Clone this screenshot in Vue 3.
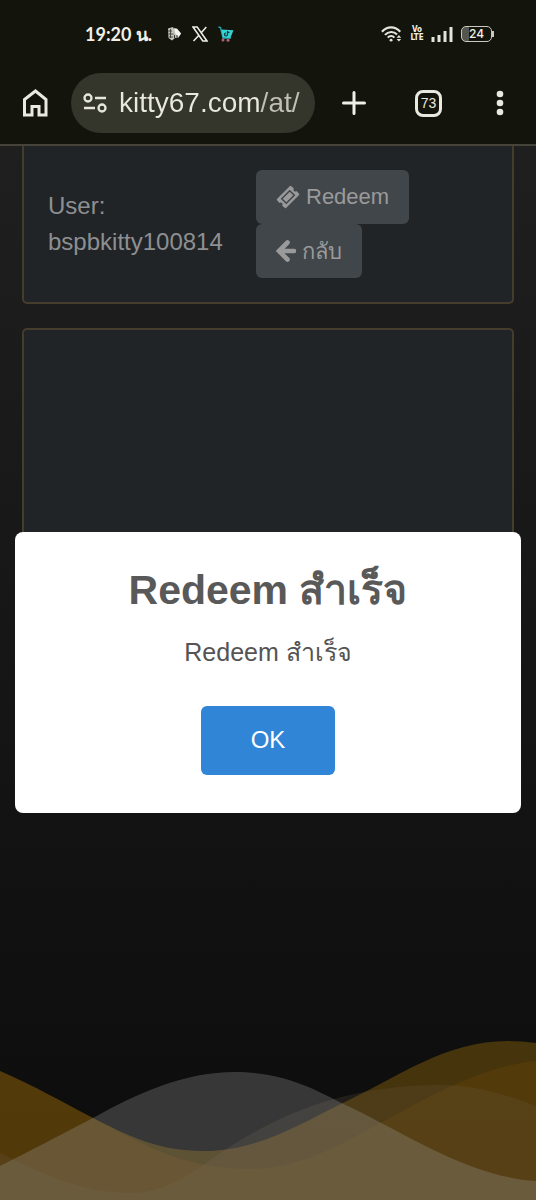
<script setup>
import { ref } from 'vue'

const address = ref('kitty67.com/at/')
const username = 'bspbkitty100814'
const dialogOpen = ref(true)
</script>

<template>
  <div class="screen">
    <header class="chrome">
      <div class="status">
        <div class="status-left">
          <span class="clock">19:20 น.</span>
          <svg class="app" viewBox="0 0 16 16" aria-hidden="true">
            <path d="M2 2.500L7 1l1 2 3-.5 4 5-2.500 4L9 12l-3 2.500L2.500 12z" fill="#c4c4be" />
            <path d="M8 2l3 1 4 4.500-2.500 3.500-3-3z" fill="#f4f4f0" />
            <path d="M2 5h4M2.500 8h5M3 11h4M4.500 3v9" stroke="#4a4a44" stroke-width="1" fill="none" />
            <path d="M8.500 9v3M11 9v2.500" stroke="#34342e" stroke-width="1" fill="none" />
          </svg>
          <svg class="app" viewBox="0 0 16 16" aria-hidden="true">
            <path d="M1 1h4.200l9.800 14h-4.200zM14.300 1L8.800 7.200M7.200 9L1.500 15" fill="none" stroke="#efefe8" stroke-width="1.500" />
          </svg>
          <svg class="app" viewBox="0 0 16 16" aria-hidden="true">
            <path d="M.5 1l2 .5 2.500 10.500h8" fill="none" stroke="#27a9ad" stroke-width="1.300" />
            <path d="M3.200 3.500l12.300.8-3.200 7.700-7.300-.5z" fill="#35d3d1" />
            <path d="M9.500 5v3.500a1.500 1.500 0 1 1-1.500-1.500M9.500 5.200c.4 1 1 1.300 2 1.300" fill="none" stroke="#12343a" stroke-width="1.200" />
            <circle cx="5" cy="14" r="1.500" fill="#b0607a" />
            <circle cx="10" cy="14.300" r="1.500" fill="#b0607a" />
          </svg>
        </div>
        <div class="status-right">
          <svg class="wifi" viewBox="0 0 24 18" aria-hidden="true">
            <g fill="none" stroke="#e4e4dc" stroke-width="2.300">
              <path d="M1 6.500C6.500.2 15.500.2 21 6.500" />
              <path d="M4.300 10C8 5.800 14 5.800 17.500 9.500" />
              <path d="M7.400 13c2-2.400 5.200-2.400 7.200 0" />
            </g>
            <circle cx="11" cy="15.700" r="1.600" fill="#e4e4dc" />
            <path d="M17 13l2.500-2.800L22 13zM17 14.500l2.500 2.800 2.500-2.800z" fill="#e4e4dc" />
          </svg>
          <span class="volte"><span>Vo</span><span>LTE</span></span>
          <svg class="signal" viewBox="0 0 22 16" aria-hidden="true">
            <path d="M2 16v-5M8 16v-7M14 16V5M20 16V1" stroke="#e4e4dc" stroke-width="3" />
          </svg>
          <span class="battery"><span>24</span></span>
        </div>
      </div>
      <div class="toolbar">
        <button class="icon-btn home" aria-label="Home">
          <svg viewBox="0 0 26 28" aria-hidden="true">
            <path d="M2.500 10.500L13.500 2l10.500 8.500V26h-7v-8.500h-7V26H2.500z" fill="none" stroke="#e9e9df" stroke-width="3" />
          </svg>
        </button>
        <div class="omnibox">
          <svg viewBox="0 0 24 20" aria-hidden="true">
            <g fill="none" stroke="#e6e6dc" stroke-width="2.300">
              <circle cx="5" cy="5" r="3.500" />
              <path d="M12 5h11M1 15h11" />
              <circle cx="19" cy="15" r="3.500" />
            </g>
          </svg>
          <input v-model="address" type="text" aria-label="Address" />
        </div>
        <button class="icon-btn plus" aria-label="New tab">
          <svg viewBox="0 0 24 24" aria-hidden="true">
            <path d="M12 1.500v21M1.500 12h21" stroke="#efefe6" stroke-width="3" stroke-linecap="round" />
          </svg>
        </button>
        <button class="icon-btn tabs" aria-label="Tabs"><span>73</span></button>
        <button class="icon-btn more" aria-label="Menu">
          <svg viewBox="0 0 8 26" aria-hidden="true">
            <g fill="#e9e9df">
              <circle cx="4" cy="4" r="3.300" />
              <circle cx="4" cy="13" r="3.300" />
              <circle cx="4" cy="22" r="3.300" />
            </g>
          </svg>
        </button>
      </div>
    </header>

    <main class="page">
      <section class="card account">
        <p class="user">User:<br />{{ username }}</p>
        <div class="actions">
          <button class="action">
            <svg viewBox="0 0 24 24" aria-hidden="true">
              <path d="M1.500 14.500L14.500 1.500l2.500 2a2.600 2.600 0 0 0 3.500 3.500L22.500 9.500 9.500 22.500l-2.500-2a2.600 2.600 0 0 0-3.500-3.500z" fill="#9a9a9b" stroke="#9a9a9b" stroke-width="1.500" stroke-linejoin="round" />
              <path d="M5.700 13.700l8-8 4.600 4.600-8 8z" fill="none" stroke="#41464a" stroke-width="1.500" />
            </svg>
            <span>Redeem</span>
          </button>
          <button class="action">
            <svg class="arrow" viewBox="0 0 20 22" aria-hidden="true">
              <path d="M11.500 2.500L3 11l8.500 8.500M3.500 11H18" fill="none" stroke="#9a9a9b" stroke-width="4.600" stroke-linecap="round" />
            </svg>
            <span>กลับ</span>
          </button>
        </div>
      </section>
      <section class="card content"></section>

      <svg class="waves" viewBox="0 0 536 180" preserveAspectRatio="none" aria-hidden="true">
        <path d="M0 51C35 66 62 82 93 98C130 117 160 131 203 131C258 131 300 104 343 83C400 56 445 21 508 21Q522 21 536 23V180H0z" fill="rgba(93,68,11,.7)" />
        <path d="M0 51C35 66 62 82 93 98C155 131 190 149 250 149C300 149 340 125 380 103C430 76 482 46 536 41V180H0z" fill="rgba(95,64,10,.5)" />
        <path d="M0 133C40 152 78 173 132 173C170 173 200 146 228 128C275 98 340 65 440 65C475 65 505 74 536 86V180H0z" fill="rgba(109,97,72,.2)" />
        <path d="M0 146C32 130 62 114 93 98C140 72 185 52 235 52C290 52 322 74 350 87C410 116 470 157 536 161V180H0z" fill="rgba(159,159,159,.29)" />
      </svg>

      <div v-if="dialogOpen" class="overlay">
        <div class="modal" role="dialog" aria-modal="true" aria-labelledby="dialog-title">
          <h2 id="dialog-title">Redeem สำเร็จ</h2>
          <p>Redeem สำเร็จ</p>
          <button class="ok" @click="dialogOpen = false">OK</button>
        </div>
      </div>
    </main>
  </div>
</template>

<style>
body {
  margin: 0;
  background: #13140c;
}
</style>

<style scoped>
.screen {
  min-height: 100vh;
  display: flex;
  flex-direction: column;
  font-family: "Liberation Sans", "Noto Sans", sans-serif;
}
.screen *,
.screen {
  box-sizing: border-box;
}
button {
  font: inherit;
  border: 0;
  padding: 0;
  cursor: pointer;
}
svg {
  display: block;
}
.chrome {
  background: #13140c;
  border-bottom: 2px solid #45433a;
}
.status {
  display: flex;
  justify-content: space-between;
  align-items: center;
  height: 68px;
  padding: 0 44px 0 85px;
  color: #f0f0e9;
}
.status-left,
.status-right {
  display: flex;
  align-items: center;
}
.status-left {
  gap: 10px;
}
.clock {
  margin-right: 4px;
  font: bold 18px/24px Lato, "Noto Sans", sans-serif;
}
.app {
  width: 16px;
  height: 16px;
}
.status-right {
  gap: 8px;
}
.wifi {
  width: 22px;
  height: 18px;
}
.volte {
  display: flex;
  flex-direction: column;
  align-items: center;
  width: 12px;
  font: bold 8px/8px "DejaVu Sans Condensed", "Liberation Sans", sans-serif;
}
.signal {
  width: 22px;
  height: 16px;
}
.battery {
  position: relative;
  width: 31px;
  height: 16px;
  border: 1px solid #c9c9c2;
  border-radius: 5px;
  background: linear-gradient(90deg, #55564f 24%, transparent 24%);
  font: 500 12px/14px Inter, sans-serif;
  text-align: center;
}
.battery::after {
  content: "";
  position: absolute;
  right: -3px;
  top: 4px;
  width: 2px;
  height: 6px;
  background: #c9c9c2;
}
.toolbar {
  display: flex;
  align-items: center;
  height: 76px;
  padding: 0 32px 6px 22px;
}
.icon-btn {
  flex: none;
  background: none;
  color: #e9e9df;
}
.home svg {
  width: 26px;
  height: 28px;
}
.omnibox {
  flex: 1;
  min-width: 0;
  display: flex;
  align-items: center;
  gap: 12px;
  height: 60px;
  margin-left: 23px;
  padding: 0 11px 0 12px;
  border-radius: 30px;
  background: #34352b;
}
.omnibox svg {
  flex: none;
  width: 24px;
  height: 20px;
}
.omnibox input {
  flex: 1;
  min-width: 0;
  height: 40px;
  padding: 0;
  border: 0;
  outline: 0;
  background: linear-gradient(90deg, #e9e9df 142px, #c0c0b5 142px);
  background-clip: text;
  color: transparent;
  font: 28px/40px "Liberation Sans", sans-serif;
}
.plus {
  margin-left: 27px;
}
.plus svg {
  width: 24px;
  height: 24px;
}
.tabs {
  width: 27px;
  height: 27px;
  margin-left: 49px;
  border: 3px solid #e9e9df;
  border-radius: 8px;
  font: 500 14px/21px "Liberation Sans", sans-serif;
}
.more {
  margin-left: 54px;
}
.more svg {
  width: 8px;
  height: 26px;
}
.page {
  position: relative;
  flex: 1;
  display: flex;
  flex-direction: column;
  gap: 24px;
  padding: 0 22px;
  background: linear-gradient(#1f1f1f, #0c0c0c);
}
.card {
  border: 2px solid #453d2c;
  border-radius: 5px;
  background: #202427;
}
.account {
  display: grid;
  grid-template-columns: 208px 1fr;
  align-items: center;
  padding: 24px;
  border-top: 0;
  border-top-left-radius: 0;
  border-top-right-radius: 0;
}
.user {
  margin: 0;
  color: #8e8f91;
  font-size: 24px;
  line-height: 36px;
}
.actions {
  display: flex;
  flex-direction: column;
  align-items: flex-start;
}
.action {
  display: flex;
  align-items: center;
  gap: 6px;
  height: 54px;
  padding: 0 20px;
  border-radius: 6px;
  background: #41464a;
  color: #9a9a9b;
  font-size: 22px;
}
.action svg {
  width: 24px;
  height: 24px;
}
.action .arrow {
  width: 20px;
  height: 22px;
}
.content {
  height: 420px;
}
.waves {
  width: calc(100% + 44px);
  height: 180px;
  margin: auto -22px 0;
}
.overlay {
  position: absolute;
  inset: 0;
  display: flex;
  align-items: center;
  justify-content: center;
  padding: 0 15px 2px;
}
.modal {
  width: 100%;
  display: flex;
  flex-direction: column;
  align-items: center;
  padding: 30px 24px 38px;
  border-radius: 8px;
  background: #fff;
  text-align: center;
}
.modal h2 {
  margin: 0;
  color: #595959;
  font-size: 41px;
  line-height: 56px;
}
.modal p {
  margin: 16px 0 36px;
  color: #545454;
  font-size: 25px;
  line-height: 36px;
}
.ok {
  width: 134px;
  height: 69px;
  border-radius: 6px;
  background: #3085d6;
  color: #fff;
  font-size: 24px;
}
</style>
